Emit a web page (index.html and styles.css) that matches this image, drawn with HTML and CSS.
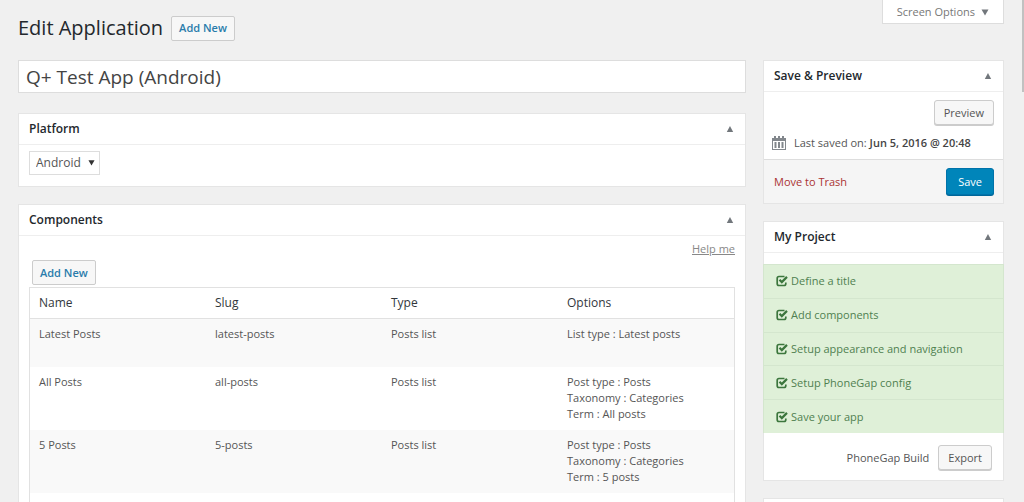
FILE: index.html
```html
<!DOCTYPE html>
<html lang="en">
<head>
<meta charset="utf-8">
<meta name="viewport" content="width=device-width, initial-scale=1">
<title>Edit Application</title>
<link rel="stylesheet" href="styles.css">
</head>
<body>
<svg class="sprite" aria-hidden="true">
  <symbol id="up" viewBox="0 0 8 8"><path d="M4 1 7.200 7H.800Z" fill="currentColor"/></symbol>
  <symbol id="down" viewBox="0 0 8 8"><path d="M.500 1.500h7L4 7.500Z" fill="currentColor"/></symbol>
  <symbol id="check" viewBox="0 0 12 12">
    <path d="M8.500 1.500H3Q1.200 1.500 1.200 3.200v5.600Q1.200 10.500 3 10.500h5Q9.800 10.500 9.800 8.800V7.500" fill="none" stroke="currentColor" stroke-width="1.700"/>
    <path d="M3.500 4.800 5.800 7.100 11 1.900" fill="none" stroke="currentColor" stroke-width="2.200"/>
  </symbol>
</svg>
<div class="scroll-thumb"></div>
<header class="top">
  <div class="heading">
    <h1>Edit Application</h1>
    <a class="button button-link" href="#new">Add New</a>
  </div>
  <button class="screen-options" type="button">Screen Options <svg class="arrow"><use href="#down"/></svg></button>
</header>
<div class="columns">
  <main class="main">
    <input class="title-input" type="text" aria-label="Title" value="Q+ Test App (Android)">
    <section class="box">
      <div class="box-head"><h2>Platform</h2><button class="toggle" type="button" aria-label="Toggle Platform"><svg class="arrow"><use href="#up"/></svg></button></div>
      <div class="platform">
        <div class="select-wrap">
          <select aria-label="Platform"><option>Android</option></select>
          <svg class="select-arrow"><use href="#down"/></svg>
        </div>
      </div>
    </section>
    <section class="box">
      <div class="box-head"><h2>Components</h2><button class="toggle" type="button" aria-label="Toggle Components"><svg class="arrow"><use href="#up"/></svg></button></div>
      <div class="components">
        <a class="help" href="#help">Help me</a>
        <a class="button button-link add" href="#component">Add New</a>
        <table>
          <thead><tr><th>Name</th><th>Slug</th><th>Type</th><th>Options</th></tr></thead>
          <tbody>
            <tr><td>Latest Posts</td><td>latest-posts</td><td>Posts list</td><td>List type : Latest posts</td></tr>
            <tr><td>All Posts</td><td>all-posts</td><td>Posts list</td><td>Post type : Posts<br>Taxonomy : Categories<br>Term : All posts</td></tr>
            <tr><td>5 Posts</td><td>5-posts</td><td>Posts list</td><td>Post type : Posts<br>Taxonomy : Categories<br>Term : 5 posts</td></tr>
            <tr><td></td><td></td><td></td><td></td></tr>
          </tbody>
        </table>
      </div>
    </section>
  </main>
  <aside class="side">
    <section class="box">
      <div class="box-head"><h2>Save &amp; Preview</h2><button class="toggle" type="button" aria-label="Toggle Save and Preview"><svg class="arrow"><use href="#up"/></svg></button></div>
      <div class="preview">
        <button class="button" type="button">Preview</button>
        <p class="saved">
          <svg class="calendar" viewBox="0 0 14 14" aria-hidden="true">
            <path d="M0 2h14v12H0Z" fill="#82878c"/>
            <path d="M2 0h2v3H2ZM6 0h2v3H6ZM10 0h2v3h-2Z" fill="#82878c"/>
            <path d="M1 5h12v8H1Z" fill="#fff"/>
            <path d="M2.500 6h2v6h-2ZM6 6h2v6H6ZM9.500 6h2v6h-2Z" fill="#82878c"/>
          </svg>
          <span>Last saved on: <b>Jun 5, 2016 @ 20:48</b></span>
        </p>
      </div>
      <div class="actions"><a class="trash" href="#trash">Move to Trash</a><button class="button primary" type="button">Save</button></div>
    </section>
    <section class="box">
      <div class="box-head"><h2>My Project</h2><button class="toggle" type="button" aria-label="Toggle My Project"><svg class="arrow"><use href="#up"/></svg></button></div>
      <ul class="steps">
        <li><svg class="check"><use href="#check"/></svg>Define a title</li>
        <li><svg class="check"><use href="#check"/></svg>Add components</li>
        <li><svg class="check"><use href="#check"/></svg>Setup appearance and navigation</li>
        <li><svg class="check"><use href="#check"/></svg>Setup PhoneGap config</li>
        <li><svg class="check"><use href="#check"/></svg>Save your app</li>
      </ul>
      <div class="export"><span>PhoneGap Build</span><button class="button" type="button">Export</button></div>
    </section>
    <section class="box"><div class="box-head"></div></section>
  </aside>
</div>
</body>
</html>
```
FILE: styles.css
```css
* { box-sizing: border-box; }
body {
  margin: 0;
  height: 100vh;
  overflow: hidden;
  background: #f0f0f0;
  color: #555;
  font: 11px/16px "Open Sans", sans-serif;
}
h1, h2, p, ul { margin: 0; padding: 0; }
button, input, select { font: inherit; color: inherit; }
.sprite { position: absolute; width: 0; height: 0; }
.scroll-thumb { position: absolute; top: 0; right: 0; width: 2px; height: 92px; background: #c1c1c1; }
.top {
  display: flex;
  justify-content: space-between;
  align-items: flex-start;
  height: 60px;
  padding: 0 20px 0 18px;
}
.heading { display: flex; align-items: center; gap: 8px; padding-top: 14px; }
h1 { font-size: 20px; line-height: 28px; font-weight: 400; color: #23282d; }
.button {
  display: inline-flex;
  align-items: center;
  justify-content: center;
  height: 25px;
  padding: 0 9px;
  border: 1px solid #ccc;
  border-radius: 3px;
  background: #f7f7f7;
  box-shadow: 0 1px 0 #ccc;
  text-decoration: none;
}
.button-link { padding: 0 7px; border-radius: 2px; box-shadow: none; color: #2a7cab; font-weight: 600; }
.screen-options {
  display: flex;
  align-items: center;
  gap: 6px;
  height: 24px;
  padding: 0 14px;
  border: 1px solid #ddd;
  border-top: 0;
  background: #fff;
  color: #777;
}
.arrow { width: 8px; height: 8px; color: #72777c; }
.columns { display: flex; gap: 17px; padding: 0 20px 0 18px; }
.main { flex: 1; min-width: 0; }
.side { width: 241px; }
.title-input {
  display: block;
  width: 100%;
  height: 33px;
  margin-bottom: 20px;
  padding: 0 7px;
  border: 1px solid #ddd;
  background: #fff;
  color: #444;
  font-size: 19px;
}
.box { margin-bottom: 17px; border: 1px solid #e5e5e5; background: #fff; }
.box-head {
  display: flex;
  align-items: center;
  justify-content: space-between;
  height: 31px;
  padding: 0 11px 0 10px;
  border-bottom: 1px solid #eee;
}
h2 { font-size: 12px; line-height: 18px; font-weight: 600; color: #23282d; }
.toggle { display: flex; padding: 0; border: 0; background: none; }
.platform { padding: 6px 10px 11px; }
.select-wrap { position: relative; width: 71px; }
select {
  display: block;
  appearance: none;
  width: 100%;
  height: 24px;
  padding: 0 0 0 6px;
  border: 1px solid #ddd;
  border-radius: 0;
  background: #fff;
  font-size: 12px;
}
.select-arrow { position: absolute; top: 8px; right: 5px; width: 7px; height: 7px; color: #333; pointer-events: none; }
.components { padding: 5px 10px 10px; }
.help { display: block; text-align: right; color: #888; }
.add { margin: 3px 0 2px 3px; display: flex; width: max-content; }
table { width: 100%; table-layout: fixed; border-collapse: separate; border-spacing: 0; border: 1px solid #e1e1e1; }
th, td { padding: 7px 9px 8px; text-align: left; vertical-align: top; }
th { padding: 6px 9px; font-size: 12px; line-height: 18px; font-weight: 400; color: #32373c; border-bottom: 1px solid #e1e1e1; }
td { height: 48px; }
tbody tr:nth-child(odd) { background: #f9f9f9; }
.preview { display: flex; flex-direction: column; align-items: flex-end; gap: 10px; padding: 8px 9px 8px 8px; }
.saved { display: flex; align-items: center; gap: 8px; width: 100%; }
.calendar { width: 14px; height: 14px; }
b { font-weight: 600; color: #444; }
.actions {
  display: flex;
  align-items: center;
  justify-content: space-between;
  height: 44px;
  padding: 0 9px 0 10px;
  border-top: 1px solid #ddd;
  background: #f5f5f5;
}
.trash { color: #a33; text-decoration: none; }
.primary { height: 27px; padding: 0 11px; border-color: #0073aa; background: #0085ba; box-shadow: 0 1px 0 #006799; color: #fff; }
.steps { display: grid; grid-auto-rows: 1fr; height: 169px; margin: 11px -1px 0; list-style: none; background: #dff0d8; color: #4f8050; }
.steps li { display: flex; align-items: center; gap: 3px; padding-left: 12px; border: 1px solid #d4e6ce; border-bottom: 0; }
.check { width: 12px; height: 12px; color: #3c763d; }
.export { display: flex; align-items: center; justify-content: flex-end; gap: 9px; padding: 12px 11px 10px; }
```
